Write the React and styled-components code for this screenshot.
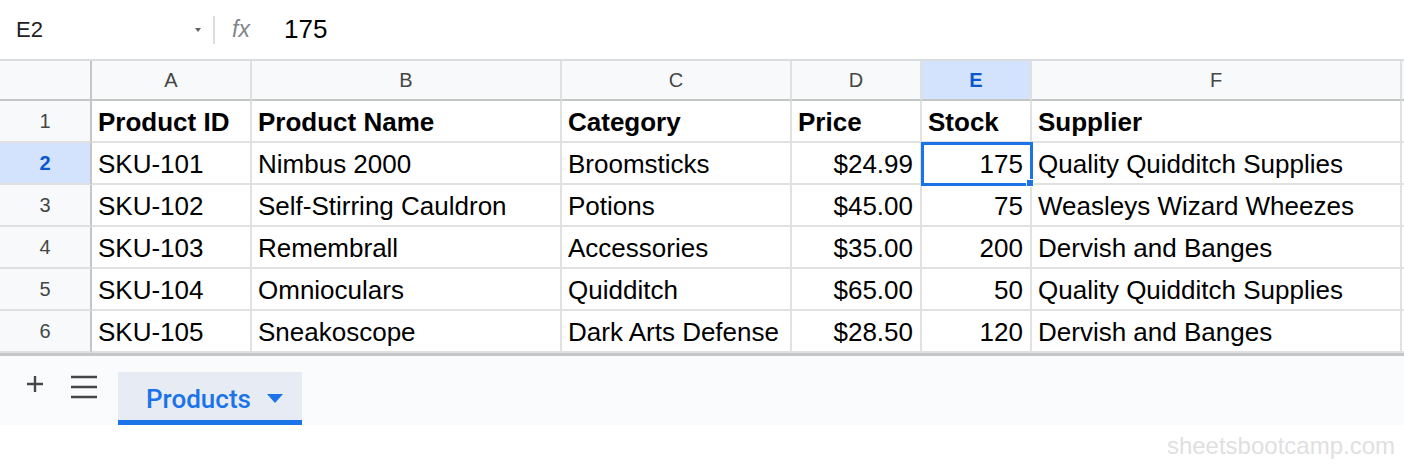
import React from 'react';
import styled, { createGlobalStyle } from 'styled-components';

const GlobalStyle = createGlobalStyle`
  * { box-sizing: border-box; }
  body {
    margin: 0;
    background: #ffffff;
    font-family: "Liberation Sans", Arial, sans-serif;
  }
`;

const columns = [
  { key: 'A', width: 160 },
  { key: 'B', width: 310 },
  { key: 'C', width: 230 },
  { key: 'D', width: 130 },
  { key: 'E', width: 110 },
  { key: 'F', width: 370 },
];

const header = ['Product ID', 'Product Name', 'Category', 'Price', 'Stock', 'Supplier'];

const rows = [
  ['SKU-101', 'Nimbus 2000', 'Broomsticks', '$24.99', '175', 'Quality Quidditch Supplies'],
  ['SKU-102', 'Self-Stirring Cauldron', 'Potions', '$45.00', '75', 'Weasleys Wizard Wheezes'],
  ['SKU-103', 'Remembrall', 'Accessories', '$35.00', '200', 'Dervish and Banges'],
  ['SKU-104', 'Omnioculars', 'Quidditch', '$65.00', '50', 'Quality Quidditch Supplies'],
  ['SKU-105', 'Sneakoscope', 'Dark Arts Defense', '$28.50', '120', 'Dervish and Banges'],
];

const Page = styled.div`
  width: 1404px;
  height: 466px;
  display: flex;
  flex-direction: column;
  overflow: hidden;
`;

const FormulaBar = styled.div`
  height: 61px;
  flex-shrink: 0;
  display: flex;
  align-items: center;
  border-bottom: 2px solid #dadce0;
`;

const NameBox = styled.div`
  width: 213px;
  display: flex;
  align-items: center;
  justify-content: space-between;
  padding: 0 12px 0 16px;
  font-size: 22px;
  color: #202124;
`;

const DropArrow = styled.span`
  width: 0;
  height: 0;
  border-left: 3px solid transparent;
  border-right: 3px solid transparent;
  border-top: 4px solid #5f6368;
`;

const Divider = styled.div`
  width: 2px;
  height: 28px;
  background: #dadce0;
`;

const Fx = styled.span`
  margin-left: 17px;
  width: 52px;
  font-size: 23px;
  font-style: italic;
  color: #80868b;
`;

const FormulaValue = styled.span`
  font-size: 26px;
  color: #000;
`;

const Grid = styled.div`
  flex-shrink: 0;
  display: grid;
  grid-template-columns: 92px ${columns.map((c) => `${c.width}px`).join(' ')} 1fr;
  grid-auto-rows: 42px;
  grid-template-rows: 40px;
  border-bottom: 3px solid #c4c7c5;
`;

const ColHead = styled.div`
  display: flex;
  align-items: center;
  justify-content: center;
  background: ${(p) => (p.$active ? '#d3e3fd' : '#f8f9fa')};
  color: ${(p) => (p.$active ? '#0b57d0' : '#444746')};
  font-weight: ${(p) => (p.$active ? 700 : 400)};
  font-size: 20px;
  border-right: 2px solid #e0e0e0;
  border-bottom: 2px solid #c4c7c5;
`;

const Corner = styled(ColHead)`
  border-right: 2px solid #c4c7c5;
`;

const RowHead = styled.div`
  display: flex;
  align-items: center;
  justify-content: center;
  background: ${(p) => (p.$active ? '#d3e3fd' : '#f8f9fa')};
  color: ${(p) => (p.$active ? '#0b57d0' : '#444746')};
  font-weight: ${(p) => (p.$active ? 700 : 400)};
  font-size: 20px;
  border-right: 2px solid #c4c7c5;
  border-bottom: 2px solid #e0e0e0;
`;

const Cell = styled.div`
  position: relative;
  display: flex;
  align-items: center;
  justify-content: ${(p) => (p.$right ? 'flex-end' : 'flex-start')};
  padding: 2px 7px 0 6px;
  font-size: 26px;
  font-weight: ${(p) => (p.$bold ? 700 : 400)};
  color: #000;
  white-space: nowrap;
  border-right: 2px solid #e1e1e1;
  border-bottom: 2px solid #e1e1e1;
  ${(p) =>
    p.$selected &&
    `
    z-index: 1;
    outline: 3px solid #1a73e8;
    outline-offset: -2px;
    &::after {
      content: '';
      position: absolute;
      right: -4px;
      bottom: -4px;
      width: 6px;
      height: 6px;
      background: #1a73e8;
      border: 1px solid #fff;
    }
  `}
`;

const Filler = styled.div`
  background: ${(p) => (p.$head ? '#f8f9fa' : '#fff')};
  border-bottom: 2px solid ${(p) => (p.$head ? '#c4c7c5' : '#e1e1e1')};
`;

const SheetBar = styled.div`
  height: 69px;
  flex-shrink: 0;
  background: #f9fbfd;
  display: flex;
  align-items: flex-end;
  padding-left: 22px;
`;

const BarIcon = styled.button`
  all: unset;
  align-self: stretch;
  display: flex;
  align-items: center;
  justify-content: ${(p) => (p.$end ? 'flex-end' : 'center')};
  width: ${(p) => p.$w}px;
  padding-bottom: ${(p) => p.$pb}px;
  color: #444746;
`;

const Tab = styled.div`
  margin-left: 20px;
  width: 184px;
  height: 53px;
  background: #e7ebf3;
  border-bottom: 5px solid #1a73e8;
  display: flex;
  align-items: center;
  padding: 5px 0 0 28px;
  gap: 16px;
  font-family: Roboto, "Liberation Sans", sans-serif;
  font-size: 26px;
  font-weight: 500;
  color: #1a73e8;
`;

const TabArrow = styled.span`
  width: 0;
  height: 0;
  border-left: 8px solid transparent;
  border-right: 8px solid transparent;
  border-top: 9px solid #1a73e8;
`;

const Footer = styled.div`
  flex: 1;
  display: flex;
  justify-content: flex-end;
  align-items: center;
  padding-right: 9px;
  font-size: 24px;
  color: #e0e0e0;
`;

export default function App() {
  return (
    <Page>
      <GlobalStyle />
      <FormulaBar>
        <NameBox>
          E2
          <DropArrow />
        </NameBox>
        <Divider />
        <Fx>fx</Fx>
        <FormulaValue>175</FormulaValue>
      </FormulaBar>

      <Grid>
        <Corner />
        {columns.map((c) => (
          <ColHead key={c.key} $active={c.key === 'E'}>
            {c.key}
          </ColHead>
        ))}
        <Filler $head />

        <RowHead>1</RowHead>
        {header.map((h) => (
          <Cell key={h} $bold>
            {h}
          </Cell>
        ))}
        <Filler />

        {rows.map((r, i) => (
          <React.Fragment key={r[0]}>
            <RowHead $active={i === 0}>{i + 2}</RowHead>
            {r.map((v, j) => (
              <Cell key={j} $right={j === 3 || j === 4} $selected={i === 0 && j === 4}>
                {v}
              </Cell>
            ))}
            <Filler />
          </React.Fragment>
        ))}
      </Grid>

      <SheetBar>
        <BarIcon $w={26} $pb={14}>
          <svg width="20" height="20" viewBox="0 0 20 20">
            <path d="M10 2v16M2 10h16" stroke="#444746" strokeWidth="2.4" />
          </svg>
        </BarIcon>
        <BarIcon $w={50} $pb={8} $end>
          <svg width="28" height="26" viewBox="0 0 28 26">
            <path d="M1 3h26M1 13h26M1 23h26" stroke="#444746" strokeWidth="2.6" />
          </svg>
        </BarIcon>
        <Tab>
          Products
          <TabArrow />
        </Tab>
      </SheetBar>

      <Footer>sheetsbootcamp.com</Footer>
    </Page>
  );
}
